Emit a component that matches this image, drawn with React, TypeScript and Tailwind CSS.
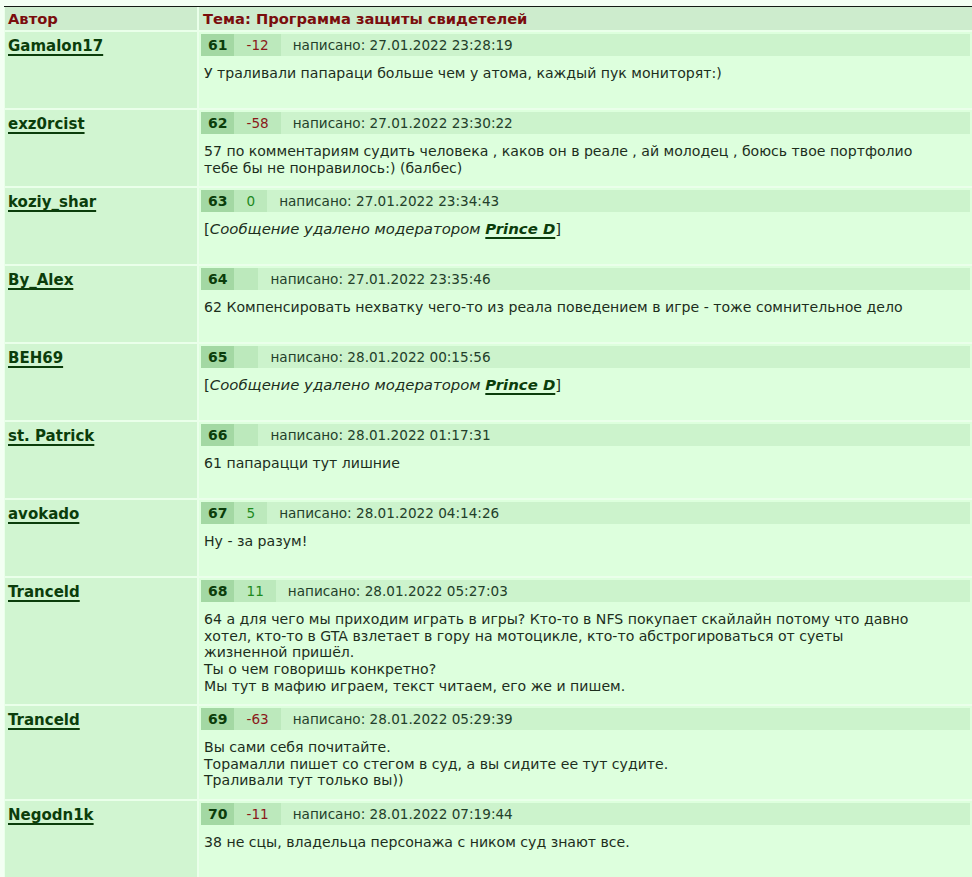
import React from "react";

type Post = {
  author: string;
  num: number;
  vote: string;
  date: string;
  lines?: string[];
  deletedBy?: string;
};

const posts: Post[] = [
  { author: "Gamalon17", num: 61, vote: "-12", date: "27.01.2022 23:28:19", lines: ["У траливали папараци больше чем у атома, каждый пук мониторят:)"] },
  {
    author: "exz0rcist",
    num: 62,
    vote: "-58",
    date: "27.01.2022 23:30:22",
    lines: ["57 по комментариям судить человека , каков он в реале , ай молодец , боюсь твое портфолио", "тебе бы не понравилось:) (балбес)"],
  },
  { author: "koziy_shar", num: 63, vote: "0", date: "27.01.2022 23:34:43", deletedBy: "Prince D" },
  { author: "By_Alex", num: 64, vote: "", date: "27.01.2022 23:35:46", lines: ["62 Компенсировать нехватку чего-то из реала поведением в игре - тоже сомнительное дело"] },
  { author: "BEH69", num: 65, vote: "", date: "28.01.2022 00:15:56", deletedBy: "Prince D" },
  { author: "st. Patrick", num: 66, vote: "", date: "28.01.2022 01:17:31", lines: ["61 папарацци тут лишние"] },
  { author: "avokado", num: 67, vote: "5", date: "28.01.2022 04:14:26", lines: ["Ну - за разум!"] },
  {
    author: "Tranceld",
    num: 68,
    vote: "11",
    date: "28.01.2022 05:27:03",
    lines: [
      "64 а для чего мы приходим играть в игры? Кто-то в NFS покупает скайлайн потому что давно",
      "хотел, кто-то в GTA взлетает в гору на мотоцикле, кто-то абстрогироваться от суеты",
      "жизненной пришёл.",
      "Ты о чем говоришь конкретно?",
      "Мы тут в мафию играем, текст читаем, его же и пишем.",
    ],
  },
  {
    author: "Tranceld",
    num: 69,
    vote: "-63",
    date: "28.01.2022 05:29:39",
    lines: ["Вы сами себя почитайте.", "Торамалли пишет со стегом в суд, а вы сидите ее тут судите.", "Траливали тут только вы))"],
  },
  { author: "Negodn1k", num: 70, vote: "-11", date: "28.01.2022 07:19:44", lines: ["38 не сцы, владельца персонажа с ником суд знают все."] },
];

function voteColor(v: string) {
  return v.startsWith("-") ? "text-[#8a1a1a]" : "text-[#1f8a1f]";
}

function PostRow({ p }: { p: Post }) {
  return (
    <div className="flex gap-[2px]">
      <div className="w-[192px] shrink-0 bg-[#d1f5d1] pl-[3px] pt-[2px]">
        <a className="text-[15px] font-bold leading-[20px] text-[#0b3d0b] underline decoration-[1.5px] underline-offset-[3px]" href="#">
          {p.author}
        </a>
      </div>
      <div className="min-w-0 flex-1 bg-[#ddffdd] p-[2px]">
        <div className="flex h-[22px] items-stretch bg-[#ccf3cc] text-[13.6px] leading-[22px]">
          <div className="bg-[#a3d8a3] px-[7px] text-[14px] font-bold text-[#0b3d0b]">{p.num}</div>
          <div className={`bg-[#bce9bc] px-[12px] ${voteColor(p.vote)}`}>{p.vote}</div>
          <div className="px-[12px] text-[#23402a]">написано: {p.date}</div>
        </div>
        <div className="min-h-[50px] pb-[8px] pl-[3px] pt-[9px] text-[14.1px] leading-[16.6px] text-[#1c2e1c]">
          {p.deletedBy ? (
            <div className="text-[14.9px]">
              [<i>Сообщение удалено модератором </i>
              <a href="#" className="font-bold italic text-[#0b3d0b] underline decoration-[1.5px] underline-offset-[3px]">
                {p.deletedBy}
              </a>
              ]
            </div>
          ) : (
            p.lines!.map((l, i) => (
              <div key={i} className="whitespace-nowrap">
                {l}
              </div>
            ))
          )}
        </div>
      </div>
    </div>
  );
}

export default function App() {
  return (
    <div className="min-h-[877px] overflow-hidden bg-[#f3fff3] pl-[4px] pt-[6px]" style={{ fontFamily: '"DejaVu Sans", Verdana, sans-serif' }}>
      <div className="border-t border-[#141a14] bg-[#eaffea] pl-[1px]">
        <div className="flex gap-[2px]">
          <div className="h-[23px] w-[192px] shrink-0 bg-[#cdeccd] pl-[3px] text-[14.7px] font-bold leading-[23px] text-[#7a0d0d]">Автор</div>
          <div className="h-[23px] flex-1 bg-[#cdeccd] pl-[4px] text-[14.7px] font-bold leading-[23px] text-[#7a0d0d]">Тема: Программа защиты свидетелей</div>
        </div>
        <div className="mt-[2px] flex flex-col gap-[2px]">
          {posts.map((p, i) => (
            <PostRow key={i} p={p} />
          ))}
        </div>
      </div>
    </div>
  );
}
